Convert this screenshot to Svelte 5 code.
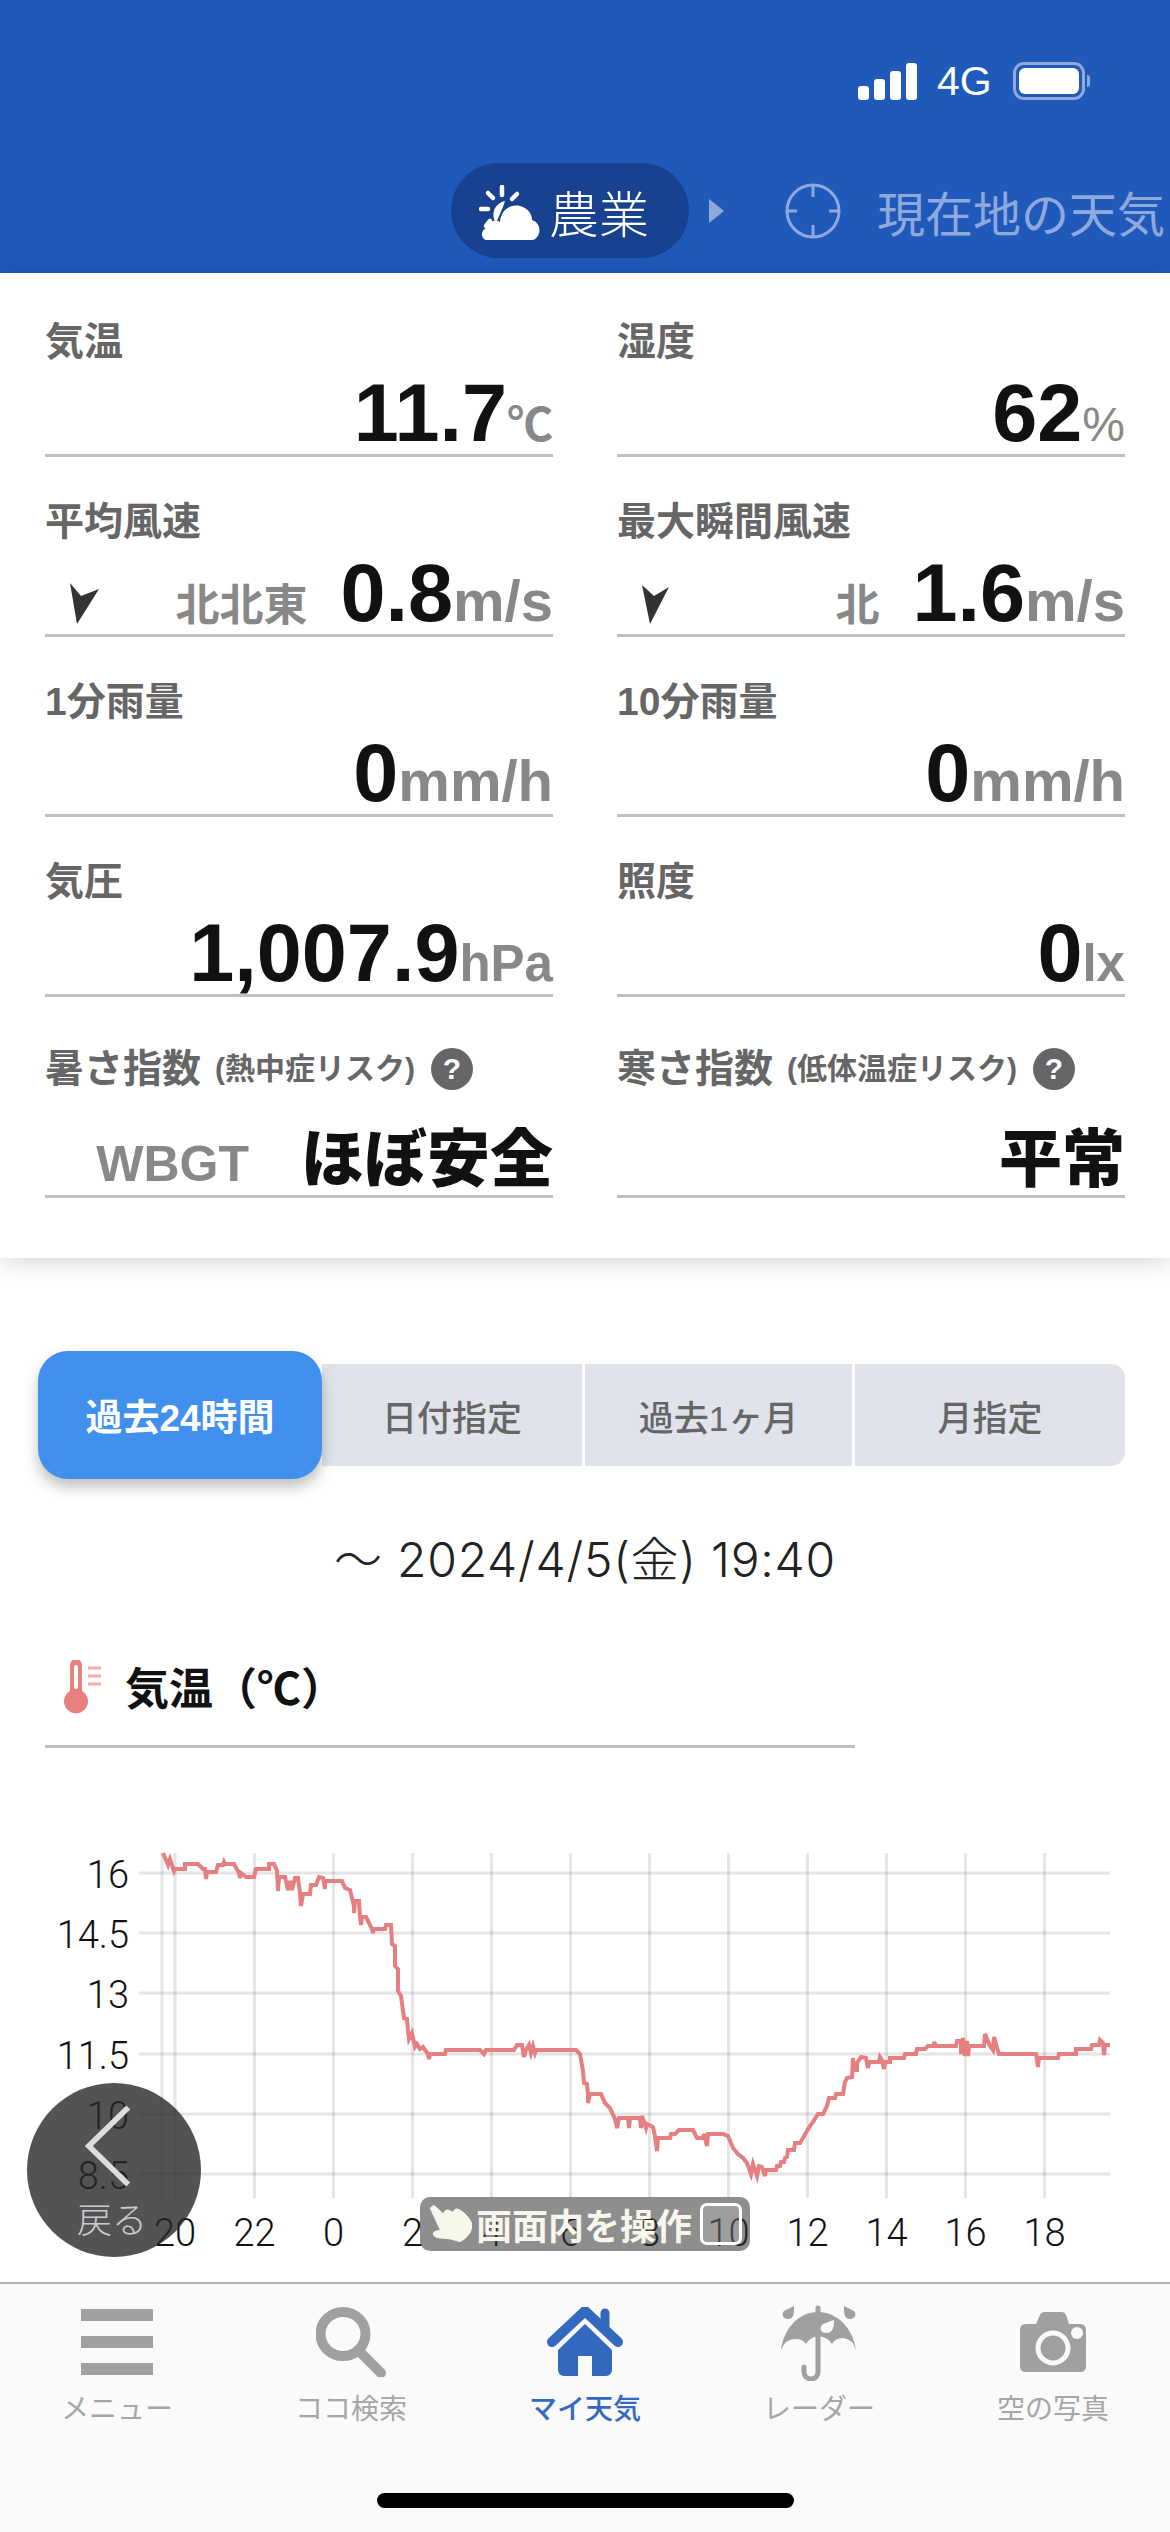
<script>
  const cells = [
    { label: '気温', value: '11.7', unit: '℃', unitClass: 'cjk' },
    { label: '湿度', value: '62', unit: '%', unitClass: 'thin' },
    { label: '平均風速', value: '0.8', unit: 'm/s', dir: '北北東', arrow: 'M1 0 L12 13 L30 6 L8 41 Z', unitClass: 'wide' },
    { label: '最大瞬間風速', value: '1.6', unit: 'm/s', dir: '北', arrow: 'M1 2 L13 13 L28 4 L9 41 Z', unitClass: 'wide' },
    { label: '1分雨量', value: '0', unit: 'mm/h', unitClass: 'wide' },
    { label: '10分雨量', value: '0', unit: 'mm/h', unitClass: 'wide' },
    { label: '気圧', value: '1,007.9', unit: 'hPa', unitClass: '' },
    { label: '照度', value: '0', unit: 'lx', unitClass: '' }
  ]

  const tabs = [
    { text: '過去24時間', active: true },
    { text: '日付指定' },
    { text: '過去1ヶ月' },
    { text: '月指定' }
  ]

  const nav = [
    { key: 'menu', text: 'メニュー' },
    { key: 'search', text: 'ココ検索' },
    { key: 'home', text: 'マイ天気', active: true },
    { key: 'radar', text: 'レーダー' },
    { key: 'photo', text: '空の写真' }
  ]

  const yTicks = [
    ['16', 1872], ['14.5', 1932], ['13', 1992], ['11.5', 2053], ['10', 2113], ['8.5', 2173]
  ]
  const xTicks = [
    ['20', 175], ['22', 254.5], ['0', 333.5], ['2', 412.5], ['4', 491.5], ['6', 570.5],
    ['8', 649.5], ['10', 728.5], ['12', 807.5], ['14', 886.5], ['16', 965.5], ['18', 1044.5]
  ]

  // traced from the day's readings, in page pixels
  const line = [
    [163,1852],[168,1864],[170,1858],[174,1870],[175,1868],[185,1868],[185,1863],[198,1863],[203,1868],[205,1868],
    [206,1878],[207,1871],[216,1871],[218,1864],[223,1864],[224,1861],[225,1863],[234,1863],[239,1872],[240,1877],
    [241,1872],[246,1876],[254,1876],[256,1868],[269,1868],[269,1863],[274,1863],[277,1870],[278,1890],[279,1876],
    [285,1876],[288,1889],[290,1880],[292,1889],[295,1877],[298,1877],[300,1892],[301,1905],[303,1893],[310,1893],
    [311,1884],[316,1884],[319,1876],[323,1877],[325,1888],[325,1880],[342,1880],[345,1887],[350,1889],[354,1905],
    [354,1912],[355,1900],[359,1900],[360,1916],[361,1924],[362,1916],[366,1916],[372,1928],[373,1932],[374,1928],
    [385,1928],[386,1924],[391,1924],[392,1943],[395,1945],[395,1965],[398,1968],[398,1990],[401,1995],[404,2017],
    [407,2018],[408,2030],[409,2038],[412,2032],[415,2046],[417,2043],[420,2048],[423,2046],[428,2053],[429,2058],
    [430,2053],[445,2053],[446,2049],[480,2049],[484,2053],[486,2049],[514,2049],[517,2044],[522,2044],[524,2056],
    [526,2049],[529,2044],[531,2052],[533,2045],[535,2052],[536,2049],[576,2049],[580,2053],[583,2070],[584,2082],
    [587,2083],[588,2093],[588,2102],[590,2093],[601,2093],[605,2102],[610,2107],[615,2118],[617,2127],[619,2117],
    [628,2117],[629,2127],[630,2117],[640,2117],[641,2127],[642,2115],[646,2127],[647,2123],[653,2126],[655,2135],
    [657,2150],[658,2137],[670,2137],[671,2133],[675,2133],[679,2129],[693,2129],[697,2137],[703,2137],[704,2133],
    [707,2145],[708,2133],[723,2133],[728,2135],[733,2147],[738,2153],[743,2157],[747,2162],[751,2173],[753,2163],
    [757,2175],[759,2165],[762,2166],[765,2175],[766,2169],[776,2169],[777,2165],[780,2165],[781,2161],[784,2161],
    [785,2157],[787,2156],[788,2149],[794,2149],[795,2142],[800,2142],[803,2137],[808,2128],[813,2121],[818,2113],
    [823,2113],[827,2105],[829,2097],[835,2097],[836,2093],[843,2093],[845,2081],[847,2077],[852,2076],[853,2057],
    [854,2069],[857,2069],[857,2062],[861,2056],[866,2057],[868,2067],[869,2061],[879,2061],
    [880,2056],[882,2059],[884,2068],[885,2061],[890,2061],[890,2057],[904,2057],[905,2053],[916,2053],[917,2048],
    [925,2048],[928,2045],[934,2045],[934,2041],[936,2045],[956,2045],[957,2040],[961,2040],[961,2053],[963,2037],
    [965,2055],[967,2040],[968,2055],[969,2045],[984,2045],[985,2033],[990,2045],[993,2049],[994,2036],[998,2050],
    [999,2053],[1036,2053],[1038,2066],[1039,2057],[1058,2057],[1059,2053],[1076,2053],[1076,2048],[1091,2048],
    [1092,2044],[1099,2044],[1100,2039],[1103,2042],[1104,2054],[1105,2044],[1110,2044]
  ].map(p => p.join(',')).join(' ')
</script>

<div class="screen">
  <header class="top">
    <div class="status">
      <div class="bars"><i class="b1"></i><i class="b2"></i><i class="b3"></i><i class="b4"></i></div>
      <span class="net">4G</span>
      <div class="battery"><i></i></div>
      <span class="nub"></span>
    </div>
    <nav class="crumbs">
      <div class="pill">
        <svg class="sun" viewBox="0 0 62 56" aria-hidden="true">
          <g stroke="#fff" stroke-width="4.5" stroke-linecap="round">
            <path d="M23 2 V10" />
            <path d="M9 8 L14 13" />
            <path d="M38 9 L33 14" />
            <path d="M2 24 H9" />
            <path d="M7 41 L11 36" />
          </g>
          <path d="M26 16 A14 14 0 0 0 17 38 L24 22 Z" fill="#fff" />
          <path d="M8 55 C2 55 1 46 7 43 C9 36 17 34 21 37 C22 24 32 19 41 21 C49 23 53 29 53 35 C60 37 63 46 58 52 C56 55 54 55 51 55 Z" fill="#fff" />
        </svg>
        <span>農業</span>
      </div>
      <span class="tri"></span>
      <svg class="aim" viewBox="0 0 56 56" aria-hidden="true">
        <circle cx="28" cy="28" r="26" fill="none" stroke="#8fa9dc" stroke-width="3" />
        <path d="M28 2 V14 M28 42 V54 M2 28 H12 M44 28 H54" stroke="#8fa9dc" stroke-width="3" />
      </svg>
      <span class="here">現在地の天気</span>
    </nav>
  </header>

  <main class="main">
    <section class="panel">
      <div class="grid">
        {#each cells as c}
          <div class="cell">
            <div class="label">{c.label}</div>
            <div class="value">
              {#if c.arrow}
                <svg class="arrow" viewBox="0 0 30 42" aria-hidden="true"><path d={c.arrow} fill="#333" /></svg>
                <span class="dir">{c.dir}</span>
              {/if}
              <span class="num">{c.value}</span><span class="unit {c.unitClass}">{c.unit}</span>
            </div>
          </div>
        {/each}
        <div class="cell tall">
          <div class="label"><span>暑さ指数</span><small>(熱中症リスク)</small><b class="help">?</b></div>
          <div class="value text">
            <span class="wbgt">WBGT</span>
            <span class="word">ほぼ安全</span>
          </div>
        </div>
        <div class="cell tall">
          <div class="label"><span>寒さ指数</span><small>(低体温症リスク)</small><b class="help">?</b></div>
          <div class="value text">
            <span class="word">平常</span>
          </div>
        </div>
      </div>
    </section>

    <div class="tabs">
      {#each tabs as t}
        <button class="tab" class:active={t.active}>{t.text}</button>
      {/each}
    </div>

    <p class="date">〜 2024/4/5(金) 19:40</p>

    <h2 class="title">
      <svg class="therm" viewBox="0 0 38 54" aria-hidden="true">
        <path d="M6 5 a6 6 0 0 1 12 0 V31 a12 12 0 1 1 -12 0 Z" fill="#e88080" />
        <rect x="10" y="5" width="4" height="24" rx="2" fill="#fff" />
        <path d="M24 8 H37 M24 16 H37 M24 24 H37" stroke="#f2aeae" stroke-width="3" />
      </svg>
      気温（℃）
    </h2>

    <div class="chart">
      <svg class="plot" viewBox="0 1840 1170 442" aria-label="気温グラフ">
        <g class="grid-lines">
          {#each yTicks as [, y]}
            <line x1="139" x2="1110" y1={y} y2={y} />
          {/each}
          <line x1="162" x2="162" y1="1852" y2="2197" />
          {#each xTicks as [, x]}
            <line x1={x} x2={x} y1="1852" y2="2197" />
          {/each}
        </g>
        <polyline class="temp" points={line} />
        {#each yTicks as [t, y]}
          <text class="tick" x="129" y={y + 15} text-anchor="end">{t}</text>
        {/each}
        {#each xTicks as [t, x]}
          <text class="tick" {x} y="2245" text-anchor="middle">{t}</text>
        {/each}
      </svg>

      <div class="back">
        <svg class="chev" viewBox="0 0 50 86" aria-hidden="true"><path d="M46 2 L4 43 L46 84" fill="none" stroke="#ddd" stroke-width="6" /></svg>
        <span>戻る</span>
      </div>

      <div class="touch">
        <svg class="hand" viewBox="40 45 135 120" aria-hidden="true">
          <path d="M47 58 Q54 46 63 53 L85 74 Q92 60 101 63 L114 70 Q122 56 131 61 Q155 72 170 100 Q174 118 165 132 Q152 152 136 158 L108 150 L70 146 Q52 142 57 130 Q64 124 78 125 Z" fill="#f7f7ec" stroke="#f7f7ec" stroke-width="3" stroke-linejoin="round" />
        </svg>
        <span>画面内を操作</span>
        <i class="check"></i>
      </div>
    </div>
  </main>

  <footer class="nav">
    <div class="items">
      {#each nav as n}
        <div class="item" class:on={n.active}>
          <div class="icon">
            {#if n.key === 'menu'}
              <svg viewBox="0 0 72 66" width="72" height="66" aria-hidden="true">
                <path d="M0 0 H72 V12 H0 Z M0 27 H72 V39 H0 Z M0 54 H72 V66 H0 Z" fill="#a0a0a0" />
              </svg>
            {:else if n.key === 'search'}
              <svg viewBox="0 0 70 70" width="70" height="70" aria-hidden="true">
                <ellipse cx="27" cy="27" rx="22.5" ry="22" fill="none" stroke="#a0a0a0" stroke-width="10" />
                <path d="M42 43 L65 66" stroke="#a0a0a0" stroke-width="10" stroke-linecap="round" />
              </svg>
            {:else if n.key === 'home'}
              <svg viewBox="0 0 76 70" width="76" height="70" aria-hidden="true">
                <path d="M5 35 L38 4 L71 35" fill="none" stroke="#3469c0" stroke-width="10" stroke-linecap="round" stroke-linejoin="round" />
                <path d="M58 6 V22" stroke="#3469c0" stroke-width="9" stroke-linecap="round" />
                <path d="M38 17 L65 43 V63 a6 6 0 0 1 -6 6 H45 V49 H31 V69 H17 a6 6 0 0 1 -6 -6 V43 Z" fill="#3469c0" />
              </svg>
            {:else if n.key === 'radar'}
              <svg viewBox="0 0 80 78" width="80" height="78" aria-hidden="true">
                <path d="M2 47 Q6 36 16 36 Q24 36 27 41 Q31 34 39 33 Q49 34 53 41 Q56 35 64 35 Q74 36 77 47 C74 25 58 9 39 9 C20 9 5 25 2 47 Z" fill="#a0a0a0" />
                <path d="M39 5 V69 a7 7 0 0 1 -14 0 V64" fill="none" stroke="#a0a0a0" stroke-width="5" stroke-linecap="round" />
                <path d="M15 3 C15 10 15 16 9 16 C4 16 2 11 5 8 Z" fill="#a0a0a0" />
                <path d="M65 3 C65 10 65 16 71 16 C76 16 78 11 75 8 Z" fill="#a0a0a0" />
                <path d="M55 17 C55 24 54 30 47 30 C41 30 40 24 44 21 Z" fill="#fafafa" />
              </svg>
            {:else}
              <svg viewBox="0 0 66 60" width="66" height="60" aria-hidden="true">
                <path d="M6 12 H16 L20 3 Q21 0 25 0 H41 Q45 0 46 3 L49 12 H60 Q66 12 66 18 V54 Q66 60 60 60 H6 Q0 60 0 54 V18 Q0 12 6 12 Z" fill="#a0a0a0" />
                <ellipse cx="33" cy="36" rx="15" ry="15" fill="none" stroke="#fafafa" stroke-width="5" />
                <circle cx="57" cy="21" r="6" fill="#fafafa" />
              </svg>
            {/if}
          </div>
          <span>{n.text}</span>
        </div>
      {/each}
    </div>
    <div class="indicator"></div>
  </footer>
</div>

<style>
  :global(body) { margin: 0; background: #fff; }
  .screen {
    width: 1170px;
    height: 2532px;
    display: flex;
    flex-direction: column;
    overflow: hidden;
    font-family: "Liberation Sans", "Noto Sans CJK JP", sans-serif;
    color: #111;
  }

  .top { height: 273px; background: #1f5abb; box-sizing: border-box; padding-top: 62px; }
  .status { display: flex; align-items: center; height: 38px; padding-left: 858px; color: #fff; }
  .bars { display: flex; align-items: flex-end; gap: 5px; height: 37px; }
  .bars i { display: block; width: 11px; background: #fff; border-radius: 3px; }
  .b1 { height: 14px; }
  .b2 { height: 21px; }
  .b3 { height: 29px; }
  .b4 { height: 37px; }
  .net { font-size: 41px; margin-left: 20px; width: 56px; line-height: 38px; }
  .battery {
    margin-left: 20px;
    width: 72px;
    height: 38px;
    box-sizing: border-box;
    border: 3px solid #8fa9dc;
    border-radius: 11px;
    padding: 3px;
  }
  .battery i { display: block; height: 100%; background: #fff; border-radius: 6px; }
  .nub { width: 3px; height: 12px; margin-left: 2px; background: #8fa9dc; border-radius: 0 3px 3px 0; }

  .crumbs { display: flex; align-items: center; margin-top: 63px; padding-left: 451px; white-space: nowrap; }
  .pill {
    width: 238px;
    height: 95px;
    box-sizing: border-box;
    padding-left: 28px;
    border-radius: 48px;
    background: #184290;
    display: flex;
    align-items: center;
    color: #fff;
    font-size: 50px;
    font-weight: 300;
  }
  .sun { width: 62px; height: 56px; margin: 4px 8px 0 0; }
  .tri {
    margin-left: 20px;
    border-left: 15px solid #8fa9dc;
    border-top: 12px solid transparent;
    border-bottom: 12px solid transparent;
  }
  .aim { width: 56px; height: 56px; margin-left: 61px; }
  .here { margin-left: 36px; font-size: 48px; color: #8fa9dc; }

  .panel { padding-bottom: 60px; box-shadow: 0 4px 22px rgba(0, 0, 0, 0.16); position: relative; background: #fff; }
  .grid {
    display: grid;
    grid-template-columns: 508px 508px;
    column-gap: 64px;
    row-gap: 46px;
    padding: 50px 45px 0;
  }
  .label {
    height: 38px;
    display: flex;
    align-items: center;
    font-size: 39px;
    line-height: 38px;
    font-weight: 700;
    color: #666;
    white-space: nowrap;
  }
  .label small { font-size: 30px; margin-left: 14px; }
  .help {
    width: 42px;
    height: 42px;
    margin-left: 16px;
    border-radius: 50%;
    background: #666;
    color: #fff;
    font-size: 30px;
    text-align: center;
    line-height: 42px;
  }
  .value {
    height: 96px;
    box-sizing: border-box;
    border-bottom: 3px solid #bfbfbf;
    display: flex;
    justify-content: flex-end;
    align-items: baseline;
    padding-top: 17px;
    position: relative;
  }
  .num { font-size: 81px; line-height: 70px; font-weight: 700; color: #111; }
  .unit { font-size: 51px; line-height: 70px; font-weight: 700; color: #888; }
  .unit.wide { font-size: 58px; }
  .unit.cjk { font-size: 46px; font-weight: 600; }
  .unit.thin { font-size: 48px; font-weight: 400; }
  .dir { font-size: 44px; line-height: 70px; font-weight: 700; color: #888; margin-right: 33px; }
  .arrow { position: absolute; left: 24px; top: 42px; width: 30px; height: 42px; }
  .tall .label { margin-top: 7px; }
  .tall .value { height: 110px; padding-top: 40px; }
  .word { font-size: 63px; line-height: 62px; font-weight: 900; color: #111; }
  .wbgt { font-size: 50px; line-height: 62px; font-weight: 700; color: #888; margin-right: 52px; }

  .tabs { display: flex; align-items: center; margin: 93px 0 0 38px; }
  .tab {
    height: 102px;
    border: 0;
    padding: 0;
    margin-left: 3px;
    background: #e0e3ea;
    color: #666;
    font-family: inherit;
    font-size: 35px;
    font-weight: 500;
  }
  .tab:nth-child(2) { width: 260px; margin-left: 0; }
  .tab:nth-child(3) { width: 267px; }
  .tab:nth-child(4) { width: 270px; border-radius: 0 14px 14px 0; }
  .tab.active {
    width: 284px;
    height: 128px;
    margin-left: 0;
    border-radius: 30px;
    background: #4290ee;
    color: #fff;
    font-size: 37px;
    font-weight: 700;
    box-shadow: 0 8px 14px rgba(0, 0, 0, 0.25);
    position: relative;
    z-index: 1;
  }

  .date {
    margin: 51px 0 0;
    height: 60px;
    line-height: 60px;
    text-align: center;
    font-family: Inter, "Noto Sans CJK JP", sans-serif;
    font-size: 48px;
    letter-spacing: 0.75px;
    font-weight: 300;
    color: #222;
  }

  .title {
    margin: 72px 45px 0;
    height: 86px;
    box-sizing: border-box;
    border-bottom: 3px solid #bfbfbf;
    width: 810px;
    display: flex;
    align-items: flex-start;
    font-size: 44px;
    line-height: 56px;
    font-weight: 700;
    color: #111;
  }
  .therm { width: 38px; height: 54px; margin: -2px 23px 0 19px; }

  .main { flex: 1; min-height: 0; }
  .chart { position: relative; height: 442px; margin-top: 93px; }
  .plot { display: block; width: 1170px; height: 442px; }
  .grid-lines line { stroke: #000; stroke-opacity: 0.1; stroke-width: 3; }
  .temp { fill: none; stroke: #e67f7f; stroke-width: 4; stroke-linejoin: miter; stroke-miterlimit: 4; }
  .tick { font-family: Roboto, "Liberation Sans", sans-serif; font-size: 38px; font-weight: 300; fill: #111; }

  .back {
    position: absolute;
    left: 27px;
    top: 242px;
    width: 174px;
    height: 174px;
    border-radius: 50%;
    background: rgba(40, 40, 40, 0.8);
    color: #ccc;
  }
  .chev { position: absolute; left: 58px; top: 21px; width: 47px; height: 84px; }
  .back span { position: absolute; left: 50px; top: 118px; font-size: 35px; line-height: 40px; font-weight: 300; }

  .touch {
    position: absolute;
    left: 420px;
    top: 356px;
    width: 330px;
    height: 54px;
    border-radius: 10px;
    background: rgba(50, 50, 50, 0.55);
    display: flex;
    align-items: center;
    box-sizing: border-box;
    padding-left: 8px;
    color: #f7f7ec;
    font-size: 36px;
    font-weight: 700;
  }
  .hand { width: 45px; height: 40px; margin-right: 3px; }
  .check {
    width: 42px;
    height: 42px;
    margin-left: 8px;
    box-sizing: border-box;
    border: 3px solid #fff;
    border-radius: 7px;
    background: rgba(255, 255, 255, 0.15);
  }

  .nav { height: 250px; box-sizing: border-box; border-top: 2px solid #b3b3b3; background: #fafafa; position: relative; }
  .items { display: grid; grid-template-columns: repeat(5, 234px); padding-top: 15px; }
  .item { display: flex; flex-direction: column; align-items: center; color: #a6a6a6; font-size: 28px; line-height: 32px; }
  .item.on { color: #3469c0; font-weight: 500; }
  .icon { height: 86px; display: flex; align-items: center; justify-content: center; margin-bottom: 9px; }
  .indicator { position: absolute; left: 377px; top: 209px; width: 417px; height: 15px; border-radius: 8px; background: #000; }
</style>
